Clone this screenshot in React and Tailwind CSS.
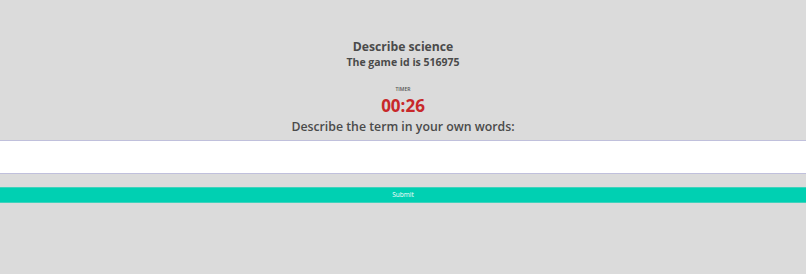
import React from 'react';

const App = () => {
  return (
    <div className="w-full h-[274px] bg-[#dbdbdb] font-['Open_Sans',sans-serif] text-[#4a4a4a] overflow-hidden">
      <div className="flex flex-col items-center pt-[38px]">
        <h1 className="text-[12.2px] leading-[17px] font-bold">Describe science</h1>
        <h2 className="text-[10.5px] leading-[14px] font-bold">The game id is 516975</h2>
        <div className="mt-[17px] text-[5px] leading-[7px] font-semibold text-[#555]">TIMER</div>
        <div className="mt-[2px] text-[17px] leading-[22px] font-bold text-[#c8282a]">00:26</div>
        <p className="mt-[1px] text-[12.3px] leading-[17px] font-semibold">Describe the term in your own words:</p>
      </div>
      <textarea className="block w-full h-[34px] mt-[5px] bg-white border-y border-[#c0c0dc] outline-none resize-none" />
      <button className="block w-full h-[16px] mt-[13px] bg-[#00d0b2] border-y border-[#40d2bc] text-white text-[6.5px] leading-[14px]">
        Submit
      </button>
    </div>
  );
};

export default App;
